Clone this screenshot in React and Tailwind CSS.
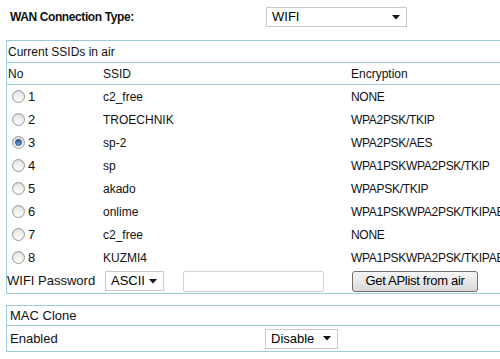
import React from 'react';

const NETWORKS = [
  { no: 1, ssid: 'c2_free', enc: 'NONE' },
  { no: 2, ssid: 'TROECHNIK', enc: 'WPA2PSK/TKIP' },
  { no: 3, ssid: 'sp-2', enc: 'WPA2PSK/AES' },
  { no: 4, ssid: 'sp', enc: 'WPA1PSKWPA2PSK/TKIP' },
  { no: 5, ssid: 'akado', enc: 'WPAPSK/TKIP' },
  { no: 6, ssid: 'onlime', enc: 'WPA1PSKWPA2PSK/TKIPAES' },
  { no: 7, ssid: 'c2_free', enc: 'NONE' },
  { no: 8, ssid: 'KUZMI4', enc: 'WPA1PSKWPA2PSK/TKIPAES' },
];

const Arrow = () => (
  <svg width="8" height="5" viewBox="0 0 8 5" className="shrink-0">
    <path d="M0 0 L8 0 L4 4.5 Z" fill="#111" />
  </svg>
);

const FakeSelect = ({ value, className }) => (
  <div className={`flex items-center justify-between bg-white border border-[#c9c9c9] pl-[5px] pr-[6px] text-[13px] text-black ${className}`}>
    <span>{value}</span>
    <Arrow />
  </div>
);

const Radio = ({ checked }) => (
  <span className="flex items-center justify-center w-[13px] h-[13px] rounded-full border border-[#9a9a9a] bg-gradient-to-b from-[#d8d8d8] to-[#f8f8f8]">
    {checked ? (
      <span className="w-[7px] h-[7px] rounded-full bg-gradient-to-b from-[#2a5d9a] to-[#6fa8dc] border border-[#1c4a80]" />
    ) : (
      <span className="w-[9px] h-[9px] rounded-full bg-gradient-to-b from-[#e6e6e6] to-[#fdfdfd]" />
    )}
  </span>
);

const App = () => {
  return (
    <div className="w-[500px] h-[359px] overflow-hidden bg-white text-[12px] text-[#111] font-['Liberation_Sans',Arial,sans-serif]">
      <div className="h-[40px] flex items-start pt-[7px]">
        <div className="w-[266px] pl-[10px] h-[20px] flex items-center font-bold text-[12px] tracking-[-0.4px]">WAN Connection Type:</div>
        <FakeSelect value="WIFI" className="w-[141px] h-[20px]" />
      </div>

      <div className="ml-[6px] w-[540px] border border-[#9ccade]">
        <div className="h-[22px] flex items-center pl-[1px] border-b border-[#9ccade]">Current SSIDs in air</div>
        <div className="h-[22px] flex items-center border-b border-[#9ccade]">
          <div className="w-[96px] pl-[1px]">No</div>
          <div className="w-[248px]">SSID</div>
          <div>Encryption</div>
        </div>
        {NETWORKS.map((n) => (
          <div key={n.no} className="h-[23px] flex items-center">
            <div className="w-[96px] pl-[5px] flex items-center gap-[3px]">
              <Radio checked={n.no === 3} />
              <span className="text-[13px]">{n.no}</span>
            </div>
            <div className="w-[248px]">{n.ssid}</div>
            <div className="whitespace-nowrap tracking-[-0.3px]">{n.enc}</div>
          </div>
        ))}
        <div className="h-[24px] flex items-center">
          <div className="w-[98px] text-[13px]">WIFI Password</div>
          <FakeSelect value="ASCII" className="w-[59px] h-[20px]" />
          <div className="ml-[19px] w-[141px] h-[21px] border border-[#d2d2d2] rounded-[2px] bg-white" />
          <button className="ml-[28px] w-[126px] h-[21px] border border-[#707070] rounded-[3px] bg-gradient-to-b from-[#f6f6f6] to-[#d9d9d9] text-[13px] tracking-[-0.3px] text-black flex items-center justify-center">
            Get APlist from air
          </button>
        </div>
      </div>

      <div className="mt-[11px] ml-[6px] w-[540px] border border-[#9ccade]">
        <div className="h-[20px] flex items-center pl-[3px] border-b border-[#9ccade] text-[13px]">MAC Clone</div>
        <div className="h-[25px] flex items-center">
          <div className="w-[258px] pl-[3px] text-[13px]">Enabled</div>
          <FakeSelect value="Disable" className="w-[73px] h-[20px]" />
        </div>
      </div>
    </div>
  );
};

export default App;
